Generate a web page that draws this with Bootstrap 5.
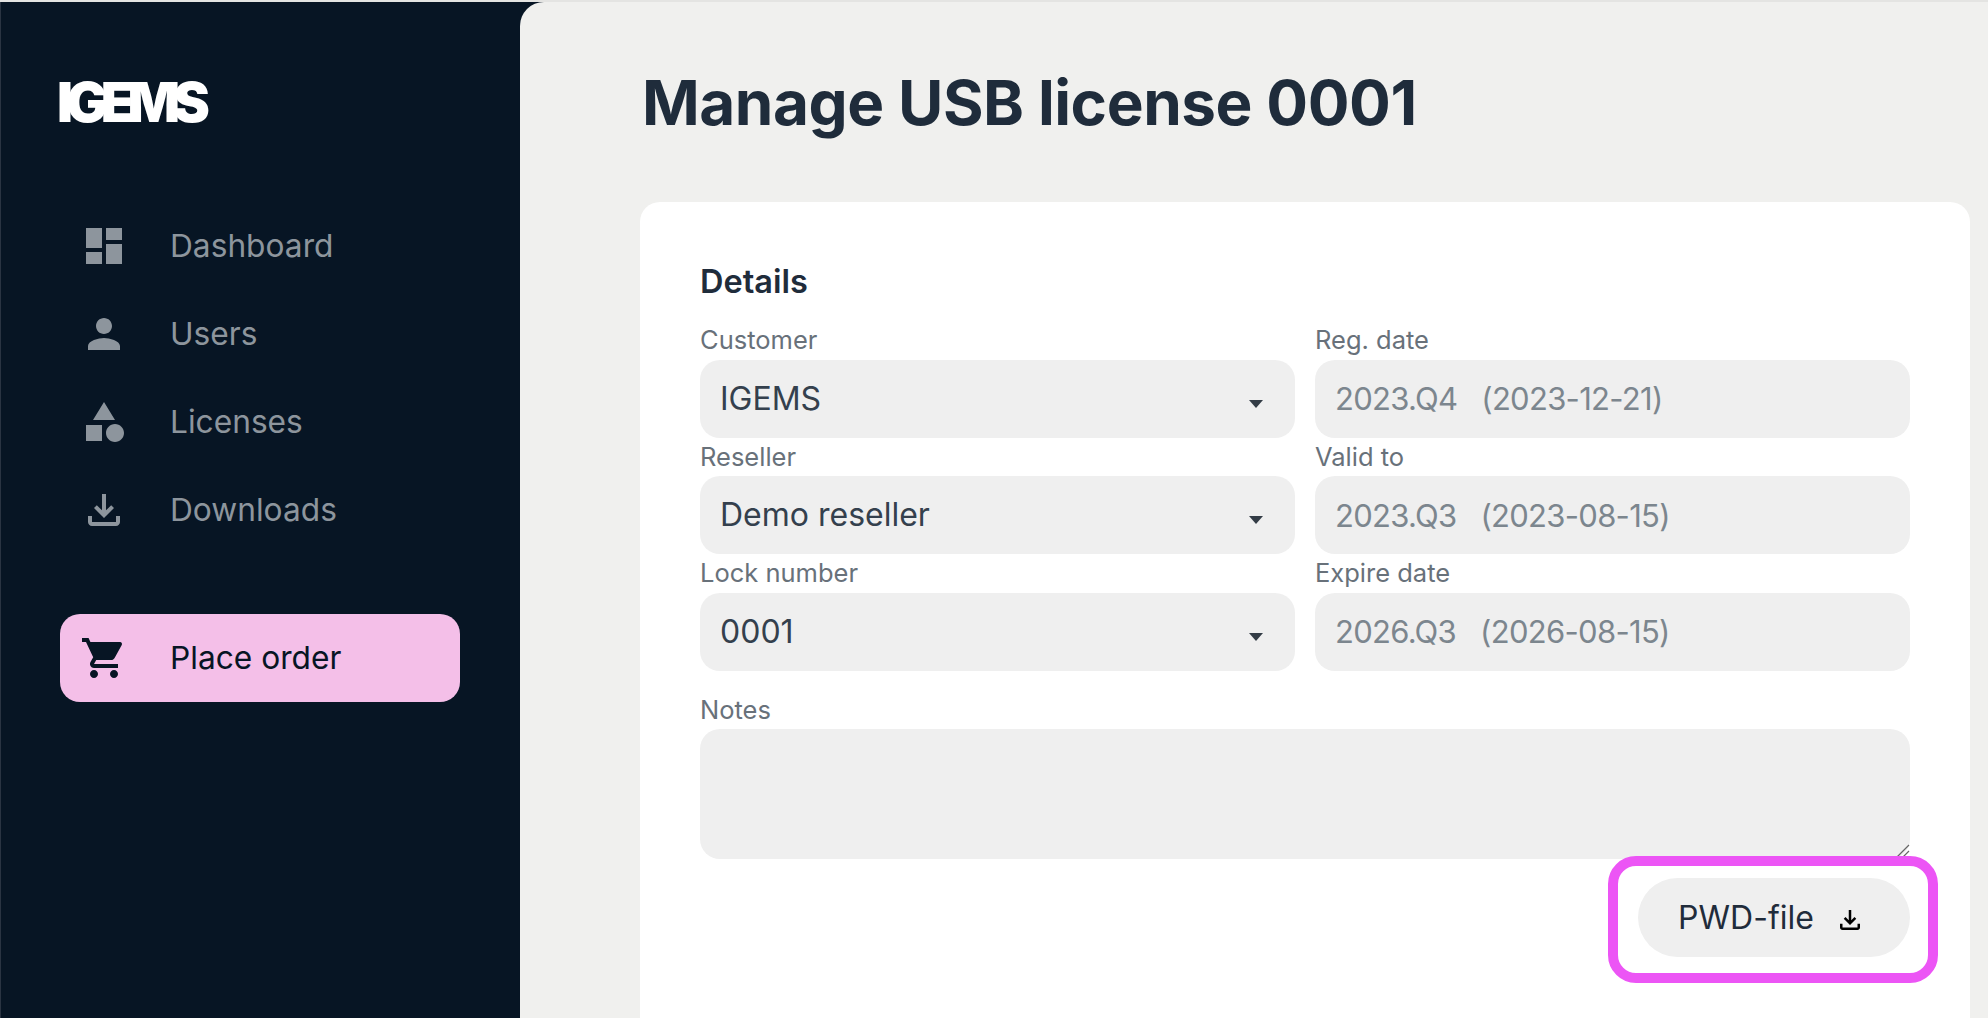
<!doctype html>
<html lang="en">
<head>
<meta charset="utf-8">
<title>Manage USB license 0001</title>
<link href="https://cdn.jsdelivr.net/npm/bootstrap@5.3.0/dist/css/bootstrap.min.css" rel="stylesheet">
<style>
html,body{height:100%;overflow:hidden}
body{background:#e4e4e2;font-family:Inter,"Liberation Sans",sans-serif;color:#1f2c3b;padding-top:2px}
.shell{height:1016px;background:#071524;border-left:1px solid #2a3442}
.side{width:519px;flex:none;padding:80px 59px 0}
.brand{font-weight:900;font-size:55px;line-height:40px;letter-spacing:-.125em;color:#fff;height:40px;display:block;text-decoration:none;margin:0 0 80px -3px}
.side-link{height:88px;padding-left:20px;color:#8d959d;font-size:31.7px;text-decoration:none;display:flex;align-items:center}
.side-link svg{width:48px;height:48px;fill:currentColor;flex:none;margin-right:42px}
.side-cta{background:#f4bfe8;color:#071524;border-radius:20px;margin-top:60px;width:400px}
.main-pane{flex:1;min-width:0;background:#f0f0ee;border-top-left-radius:24px;padding:0 18px 0 120px;display:flex;flex-direction:column}
.page-title{font-size:62px;font-weight:700;line-height:72px;margin:65px 0 0 2px;color:#1f2c3b;letter-spacing:-.0072em}
.panel{background:#fff;border-radius:20px 20px 0 0;margin-top:63px;padding:58px 60px 0;position:relative;flex:1;min-height:0}
.panel-head{font-size:32.5px;font-weight:600;line-height:44px;margin:0 0 17px}
.grid-tight{--bs-gutter-x:20px;--bs-gutter-y:0}
.fld-label{display:block;font-size:25.5px;line-height:38.5px;color:#68717a;margin:0}
.fld{height:78px;border:0;border-radius:20px;background-color:#efefef;font-size:32px;color:#34404d;padding:0 20px;box-shadow:none}
select.fld{background-image:url("data:image/svg+xml,%3Csvg xmlns='http://www.w3.org/2000/svg' viewBox='0 0 14 8'%3E%3Cpath d='M0 0h14L7 8z' fill='%23333c46'/%3E%3C/svg%3E");background-size:14px 8px;background-position:right 32px top 40px}
.fld:disabled{background-color:#efefef;color:#7c868e;opacity:1;font-size:31px;letter-spacing:-.7px}
textarea.fld{height:130px;display:block;padding:20px}
textarea.fld::-webkit-resizer{background:url("data:image/svg+xml,%3Csvg xmlns='http://www.w3.org/2000/svg' viewBox='0 0 15 15'%3E%3Cpath d='M14 1 1 14M14 7 7 14' stroke='%23666' stroke-width='1.2' fill='none'/%3E%3C/svg%3E") no-repeat}
.notes-wrap{margin-top:20px}
.file-btn{height:79px;width:272px;background:#efefef;color:#1f2c3b;border:0;border-radius:40px;font-size:32px;margin-top:19px;display:flex;align-items:center;justify-content:center}
.file-btn svg{width:30px;height:30px;fill:#000;margin:4px 5px 0 21px}
.callout{position:absolute;left:968px;top:654px;width:330px;height:127px;border:10px solid #ec55f5;border-radius:28px;pointer-events:none}
</style>
</head>
<body>
<div class="shell d-flex">
  <nav class="side">
    <a class="brand" href="#">IGEMS</a>
    <a class="side-link" href="#"><svg viewBox="0 0 24 24"><path d="M3 13h8V3H3v10zm0 8h8v-6H3v6zm10 0h8V11h-8v10zm0-18v6h8V3h-8z"/></svg>Dashboard</a>
    <a class="side-link" href="#"><svg viewBox="0 0 24 24"><path d="M12 12c2.21 0 4-1.79 4-4s-1.79-4-4-4-4 1.79-4 4 1.79 4 4 4zm0 2c-2.67 0-8 1.34-8 4v2h16v-2c0-2.66-5.33-4-8-4z"/></svg>Users</a>
    <a class="side-link" href="#"><svg viewBox="0 0 24 24"><path d="M12 2l-5.5 9h11L12 2zm5.5 11c-2.49 0-4.5 2.01-4.5 4.5s2.01 4.5 4.5 4.5 4.5-2.01 4.5-4.5-2.01-4.5-4.5-4.5zM3 13.5h8v8H3z"/></svg>Licenses</a>
    <a class="side-link" href="#"><svg viewBox="0 0 24 24"><path d="M18 15v3H6v-3H4v3c0 1.1.9 2 2 2h12c1.1 0 2-.9 2-2v-3h-2zm-1-4l-1.41-1.41L13 12.17V4h-2v8.17L8.41 9.59 7 11l5 5 5-5z"/></svg>Downloads</a>
    <a class="side-link side-cta" href="#"><svg viewBox="0 0 24 24"><path d="M15.55 13c.75 0 1.41-.41 1.75-1.03l3.58-6.49c.37-.66-.11-1.48-.87-1.48H5.21l-.94-2H1v2h2l3.6 7.59-1.35 2.44C4.52 15.37 5.48 17 7 17h12v-2H7l1.1-2h7.45zM7 18c-1.1 0-2 .9-2 2s.9 2 2 2 2-.9 2-2-.9-2-2-2zm10 0c-1.1 0-2 .9-2 2s.9 2 2 2 2-.9 2-2-.9-2-2-2z"/></svg>Place order</a>
  </nav>
  <main class="main-pane">
    <h1 class="page-title">Manage USB license 0001</h1>
    <section class="panel">
      <h2 class="panel-head">Details</h2>
      <div class="row grid-tight">
        <div class="col-6"><label class="fld-label" for="f1">Customer</label><select id="f1" class="form-select fld"><option>IGEMS</option></select></div>
        <div class="col-6"><label class="fld-label" for="f2">Reg. date</label><input id="f2" class="form-control fld" disabled value="2023.Q4&#160;&#160;&#160;(2023-12-21)"></div>
        <div class="col-6"><label class="fld-label" for="f3">Reseller</label><select id="f3" class="form-select fld"><option>Demo reseller</option></select></div>
        <div class="col-6"><label class="fld-label" for="f4">Valid to</label><input id="f4" class="form-control fld" disabled value="2023.Q3&#160;&#160;&#160;(2023-08-15)"></div>
        <div class="col-6"><label class="fld-label" for="f5">Lock number</label><select id="f5" class="form-select fld"><option>0001</option></select></div>
        <div class="col-6"><label class="fld-label" for="f6">Expire date</label><input id="f6" class="form-control fld" disabled value="2026.Q3&#160;&#160;&#160;(2026-08-15)"></div>
      </div>
      <div class="notes-wrap">
        <label class="fld-label" for="f7">Notes</label>
        <textarea id="f7" class="form-control fld"></textarea>
      </div>
      <div class="d-flex justify-content-end">
        <button type="button" class="btn file-btn">PWD-file<svg viewBox="0 0 24 24"><path d="M18 15v3H6v-3H4v3c0 1.1.9 2 2 2h12c1.1 0 2-.9 2-2v-3h-2zm-1-4l-1.41-1.41L13 12.17V4h-2v8.17L8.41 9.59 7 11l5 5 5-5z"/></svg></button>
      </div>
      <div class="callout"></div>
    </section>
  </main>
</div>
<script src="https://cdn.jsdelivr.net/npm/bootstrap@5.3.0/dist/js/bootstrap.bundle.min.js"></script>
</body>
</html>
